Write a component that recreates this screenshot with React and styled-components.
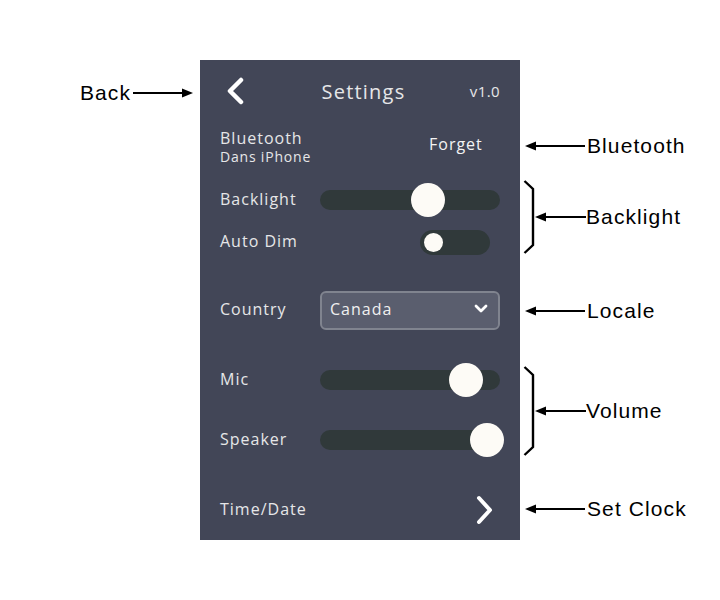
import React from "react";
import styled, { createGlobalStyle } from "styled-components";

const GlobalStyle = createGlobalStyle`
  html, body {
    margin: 0;
    padding: 0;
    background: #ffffff;
  }
`;

const Page = styled.div`
  width: 720px;
  height: 600px;
  padding-top: 60px;
  box-sizing: border-box;
`;

const Section = styled.div`
  display: grid;
  grid-template-columns: 200px 320px 200px;
`;

const LeftNote = styled.div`
  display: flex;
  justify-content: flex-end;
  align-items: flex-start;
  padding-right: 7px;
`;

const RightNote = styled.div`
  display: flex;
  align-items: flex-start;
  padding-left: ${(p) => p.$indent ?? 5}px;
`;

const Callout = styled.div`
  display: flex;
  align-items: center;
  height: 24px;
  margin-top: ${(p) => p.$top || 0}px;
  font-family: "Liberation Sans", Arial, sans-serif;
  font-size: 21px;
  letter-spacing: 1.1px;
  color: #000;
  gap: 2px;
`;

const BracketCallout = styled.div`
  display: flex;
  align-items: center;
  margin-top: ${(p) => p.$top}px;
  font-family: "Liberation Sans", Arial, sans-serif;
  font-size: 21px;
  letter-spacing: 1.1px;
  color: #000;
`;

const Panel = styled.div`
  background: #424657;
  height: ${(p) => p.$h}px;
  padding: ${(p) => p.$pad || "0 20px"};
  box-sizing: border-box;
  font-family: "Open Sans", sans-serif;
  color: #e6e6e8;
  display: flex;
  flex-direction: column;
  justify-content: ${(p) => p.$justify || "center"};
`;

const Header = styled.div`
  display: grid;
  grid-template-columns: 1fr auto 1fr;
  align-items: center;
  padding-left: 7px;
`;

const Title = styled.div`
  font-size: 20px;
  letter-spacing: 1.2px;
`;

const Version = styled.div`
  justify-self: end;
  font-size: 15px;
  letter-spacing: 0.4px;
`;

const Row = styled.div`
  display: grid;
  grid-template-columns: 100px 180px;
  align-items: center;
  height: ${(p) => p.$h}px;
`;

const Label = styled.div`
  font-size: 16px;
  letter-spacing: 1px;
  line-height: 18px;
  padding-bottom: 2px;
`;

const DeviceName = styled.div`
  font-size: 16px;
  letter-spacing: 1px;
  line-height: 18px;
`;

const SubLabel = styled.div`
  font-size: 14px;
  letter-spacing: 0.8px;
  line-height: 20px;
`;

const ForgetButton = styled.div`
  align-self: start;
  font-size: 16px;
  letter-spacing: 1px;
  line-height: 18px;
  color: #f4f4f4;
  margin: 6px 0 0 109px;
`;

const Track = styled.div`
  position: relative;
  width: 180px;
  height: 20px;
  border-radius: 10px;
  background: #30393a;
`;

const Thumb = styled.div`
  position: absolute;
  top: -7px;
  width: 34px;
  height: 34px;
  border-radius: 50%;
  background: #fdfbf6;
`;

const Toggle = styled.div`
  position: relative;
  width: 70px;
  height: 25px;
  margin-left: 100px;
  border-radius: 13px;
  background: #30393a;
`;

const Knob = styled.div`
  position: absolute;
  left: 4px;
  top: 3px;
  width: 19px;
  height: 19px;
  border-radius: 50%;
  background: #fdfbf6;
`;

const Select = styled.div`
  display: flex;
  align-items: center;
  justify-content: space-between;
  height: 39px;
  box-sizing: border-box;
  padding: 0 10px 3px 8px;
  border: 2px solid #80848f;
  border-radius: 6px;
  background: #5a5e6e;
  font-size: 16px;
  letter-spacing: 1px;
  color: #f0f0f0;
`;

const NavRow = styled.div`
  display: flex;
  align-items: center;
  justify-content: space-between;
  padding: 10px 5px 0 0;
`;

function Arrow({ length = 60, dir = "left" }) {
  const flip = dir === "right";
  return (
    <svg width={length} height="12" viewBox={`0 0 ${length} 12`}>
      <g transform={flip ? `translate(${length} 0) scale(-1 1)` : undefined}>
        <line x1="8" y1="6" x2={length} y2="6" stroke="#000" strokeWidth="2" />
        <polygon points="0,6 11,1.5 11,10.5" fill="#000" />
      </g>
    </svg>
  );
}

function Bracket({ height }) {
  return (
    <svg width="12" height={height} viewBox={`0 0 12 ${height}`}>
      <polyline
        points={`1.5,1 10,9 10,${height - 9} 1.5,${height - 1}`}
        fill="none"
        stroke="#000"
        strokeWidth="2.4"
      />
    </svg>
  );
}

function Chevron({ dir }) {
  if (dir === "left") {
    return (
      <svg width="20" height="30" viewBox="0 0 20 30">
        <polyline points="14,4 3,15 14,26" fill="none" stroke="#fff" strokeWidth="4.5" strokeLinecap="round" strokeLinejoin="round" />
      </svg>
    );
  }
  if (dir === "right") {
    return (
      <svg width="20" height="30" viewBox="0 0 20 30">
        <polyline points="4,3 15,15 4,27" fill="none" stroke="#fff" strokeWidth="4" strokeLinecap="round" strokeLinejoin="round" />
      </svg>
    );
  }
  return (
    <svg width="14" height="10" viewBox="0 0 14 10">
      <polyline points="2,2 7,7 12,2" fill="none" stroke="#fff" strokeWidth="2.8" strokeLinecap="round" strokeLinejoin="round" />
    </svg>
  );
}

function Slider({ value }) {
  return (
    <Track>
      <Thumb style={{ left: `${value * 180 - 17}px` }} />
    </Track>
  );
}

export default function App() {
  return (
    <>
      <GlobalStyle />
      <Page>
        <Section>
          <LeftNote>
            <Callout $top={21}>
              Back
              <Arrow dir="right" />
            </Callout>
          </LeftNote>
          <Panel $h={62}>
            <Header>
              <Chevron dir="left" />
              <Title>Settings</Title>
              <Version>v1.0</Version>
            </Header>
          </Panel>
          <div />
        </Section>

        <Section>
          <div />
          <Panel $h={52} $justify="flex-start" $pad="7px 20px 0">
            <Row $h={38}>
              <div>
                <DeviceName>Bluetooth</DeviceName>
                <SubLabel>Dans iPhone</SubLabel>
              </div>
              <ForgetButton>Forget</ForgetButton>
            </Row>
          </Panel>
          <RightNote>
            <Callout $top={12}>
              <Arrow />
              Bluetooth
            </Callout>
          </RightNote>
        </Section>

        <Section>
          <div />
          <Panel $h={96} $justify="flex-start">
            <Row $h={52}>
              <Label>Backlight</Label>
              <Slider value={0.6} />
            </Row>
            <Row $h={32}>
              <Label>Auto Dim</Label>
              <Toggle>
                <Knob />
              </Toggle>
            </Row>
          </Panel>
          <RightNote $indent={3}>
            <BracketCallout $top={6}>
              <Bracket height={74} />
              <Arrow length={51} />
              Backlight
            </BracketCallout>
          </RightNote>
        </Section>

        <Section>
          <div />
          <Panel $h={80}>
            <Row $h={40}>
              <Label>Country</Label>
              <Select>
                Canada
                <Chevron dir="down" />
              </Select>
            </Row>
          </Panel>
          <RightNote>
            <Callout $top={29}>
              <Arrow />
              Locale
            </Callout>
          </RightNote>
        </Section>

        <Section>
          <div />
          <Panel $h={120} $justify="flex-start">
            <Row $h={60}>
              <Label>Mic</Label>
              <Slider value={0.81} />
            </Row>
            <Row $h={60}>
              <Label>Speaker</Label>
              <Slider value={0.93} />
            </Row>
          </Panel>
          <RightNote $indent={3}>
            <BracketCallout $top={16}>
              <Bracket height={90} />
              <Arrow length={51} />
              Volume
            </BracketCallout>
          </RightNote>
        </Section>

        <Section>
          <div />
          <Panel $h={70}>
            <NavRow>
              <Label>Time/Date</Label>
              <Chevron dir="right" />
            </NavRow>
          </Panel>
          <RightNote>
            <Callout $top={27}>
              <Arrow />
              Set Clock
            </Callout>
          </RightNote>
        </Section>
      </Page>
    </>
  );
}
